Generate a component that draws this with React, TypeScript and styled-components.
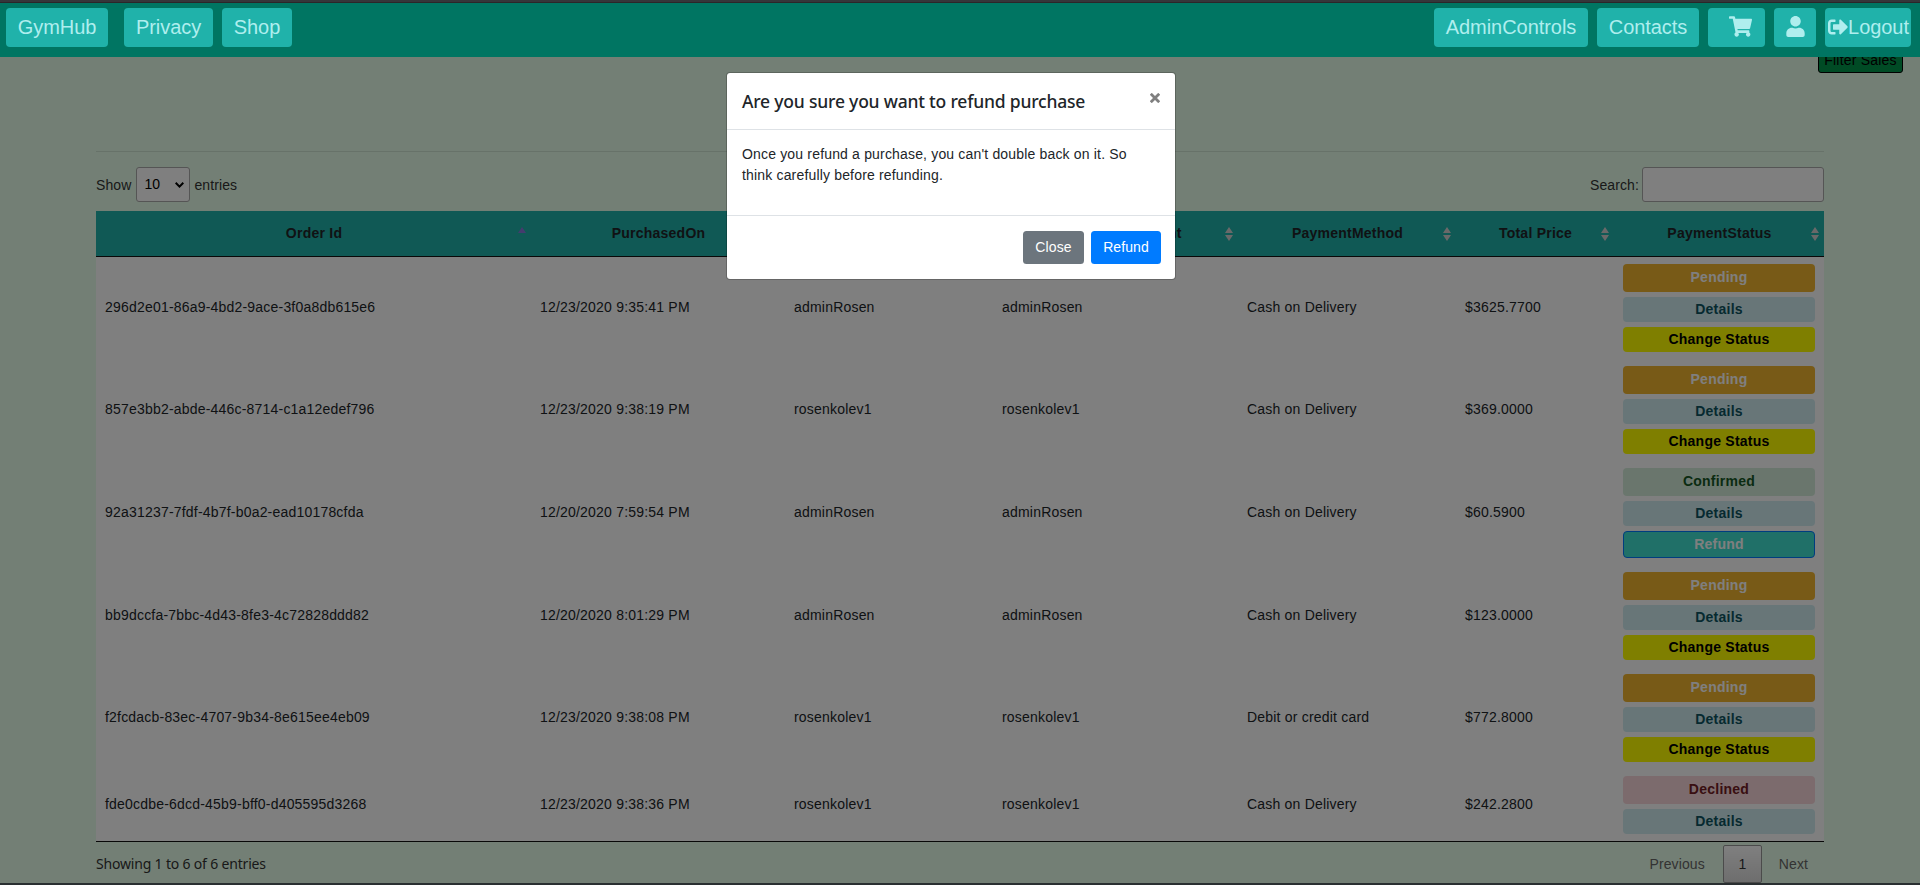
import React from "react";
import styled, { createGlobalStyle, css } from "styled-components";
import { FaShoppingCart, FaUser, FaSignOutAlt } from "react-icons/fa";

const GlobalStyle = createGlobalStyle`
  * { box-sizing: border-box; }
  body { margin: 0; background: #e6ffea; }
`;

const Page = styled.div`
  position: relative;
  display: flex;
  flex-direction: column;
  width: 1920px;
  height: 885px;
  overflow: hidden;
  border-top: 2px solid #35363a;
  border-bottom: 2px solid #2a2f31;
  background: #e6ffea;
  color: #212529;
  font: 14px/21px "Liberation Sans", Arial, sans-serif;
`;

const NavBar = styled.nav`
  display: flex;
  justify-content: space-between;
  flex: none;
  height: 55px;
  padding: 5px 9px 0 6px;
  border-top: 1px solid #2b2629;
  background: #007562;
`;

const NavGroup = styled.div`
  display: flex;
  gap: 9px;
`;

const NavButton = styled.a<{ $width: number; $gapAfter?: number; $shift?: number }>`
  display: flex;
  align-items: center;
  justify-content: center;
  width: ${(p) => p.$width}px;
  height: 39px;
  margin-right: ${(p) => p.$gapAfter ?? 0}px;
  padding-left: ${(p) => p.$shift ?? 0}px;
  padding-bottom: 2px;
  border-radius: 4px;
  background: #20b2aa;
  color: #afeeee;
  font-size: 20px;
  line-height: 30px;
  white-space: nowrap;
  letter-spacing: -0.05px;
`;

const Main = styled.main`
  position: relative;
  flex: 1;
  overflow: hidden;
`;

const FilterRow = styled.div`
  display: flex;
  justify-content: flex-end;
  height: 16px;
  align-items: flex-end;
  padding-right: 17px;
`;

const FilterButton = styled.button`
  flex: none;
  width: 85px;
  height: 27px;
  padding: 1px 0 0;
  border: 1px solid #000;
  border-radius: 3px;
  background: #00964b;
  color: #000;
  font: 14px/21px "Liberation Sans", Arial, sans-serif;
  letter-spacing: 0.2px;
`;

const Content = styled.section`
  width: 1728px;
  margin: 78px 0 0 96px;
`;

const Rule = styled.hr`
  height: 1px;
  margin: 0 0 15px;
  border: 0;
  background: rgba(0, 0, 0, 0.1);
`;

const Controls = styled.div`
  display: flex;
  justify-content: space-between;
  height: 44px;
  color: #333;
`;

const ControlLabel = styled.label<{ $gap: number }>`
  display: flex;
  gap: ${(p) => p.$gap}px;
  height: 35px;
  align-items: center;
`;

const LabelText = styled.span`
  padding-top: 1px;
  letter-spacing: 0.1px;
`;

const SelectBox = styled.span`
  display: flex;
  align-items: center;
  justify-content: space-between;
  width: 54px;
  height: 35px;
  margin-left: 1px;
  padding: 0 5px 0 7px;
  border: 1px solid #aaa;
  border-radius: 3px;
  background: #fff;
  color: #000;
`;

const SearchInput = styled.input`
  width: 182px;
  height: 35px;
  border: 1px solid #aaa;
  border-radius: 3px;
  background: #fff;
`;

const Table = styled.table`
  width: 1728px;
  table-layout: fixed;
  border-collapse: separate;
  border-spacing: 0;
  border-bottom: 1px solid #111;
`;

const HeadCell = styled.th`
  height: 46px;
  padding: 0;
  border-bottom: 1px solid #111;
  background: #20b2aa;
  color: #212529;
  font-weight: 700;
  letter-spacing: 0.24px;
`;

const HeadInner = styled.div`
  display: flex;
  align-items: center;
  padding: 0 3px 0 16px;
`;

const HeadLabel = styled.span`
  flex: 1;
  text-align: center;
`;

const Cell = styled.td`
  padding: 7px 9px;
  background: #fff;
  vertical-align: middle;
  white-space: nowrap;
`;

const CellText = styled.span`
  display: block;
  padding-bottom: 2px;
  letter-spacing: 0.2px;
`;

const Stack = styled.div`
  display: flex;
  flex-direction: column;
  gap: 5px;
`;

type Tone = "Pending" | "Confirmed" | "Declined" | "Details" | "Change Status" | "Refund";

const tones = {
  Pending: css`height: 28px; padding-bottom: 2px; background: #f0b42f; color: #fff;`,
  Confirmed: css`height: 28px; padding-bottom: 2px; background: #d4edda; color: #155724;`,
  Declined: css`height: 28px; padding-bottom: 2px; background: #f8d7da; color: #721c24;`,
  Details: css`height: 25px; background: #d1ecf1; color: #0c5460;`,
  "Change Status": css`height: 25px; background: #ff0; color: #000;`,
  Refund: css`height: 27px; border: 1px solid #007bff; background: #40e0d0; color: #fff;`,
};

const Pill = styled.div<{ $tone: Tone }>`
  display: flex;
  align-items: center;
  justify-content: center;
  border-radius: 4px;
  font-weight: 700;
  line-height: 21px;
  letter-spacing: 0.24px;
  ${(p) => tones[p.$tone]}
`;

const Footer = styled.div`
  display: flex;
  justify-content: space-between;
  padding-top: 3px;
  color: #333;
`;

const Info = styled.div`
  padding-top: 8px;
  font-family: "Noto Sans", sans-serif;
  letter-spacing: -0.18px;
`;

const Pager = styled.div`
  display: flex;
  align-items: center;
  color: #666;
`;

const PageLink = styled.span<{ $right: number }>`
  margin-right: ${(p) => p.$right}px;
  letter-spacing: 0.1px;
`;

const PageCurrent = styled.span`
  display: flex;
  align-items: center;
  justify-content: center;
  width: 39px;
  height: 38px;
  margin-right: 17px;
  border: 1px solid #979797;
  border-radius: 2px;
  background: linear-gradient(#fff, #dcdcdc);
  color: #333;
`;

const Backdrop = styled.div`
  position: absolute;
  inset: 0;
  background: rgba(0, 0, 0, 0.5);
`;

const Modal = styled.div`
  position: absolute;
  top: 15px;
  left: 726px;
  width: 450px;
  border: 1px solid rgba(0, 0, 0, 0.2);
  border-radius: 4px;
  background: #fff;
  background-clip: padding-box;
`;

const ModalHeader = styled.div`
  display: flex;
  justify-content: space-between;
  height: 57px;
  padding: 15px;
  border-bottom: 1px solid #dee2e6;
`;

const ModalTitle = styled.h5`
  margin: 0;
  font: 500 17.5px/27px "Noto Sans", sans-serif;
  letter-spacing: -0.2px;
  white-space: nowrap;
`;

const CloseIcon = styled.svg`
  width: 10px;
  height: 10px;
  margin-top: 4.5px;
`;

const ModalBody = styled.div`
  height: 85px;
  padding: 14px 25px 14px 15px;
  letter-spacing: 0.17px;
`;

const ModalFooter = styled.div`
  display: flex;
  justify-content: flex-end;
  gap: 7px;
  height: 64px;
  padding: 15px 14px 0;
  border-top: 1px solid #dee2e6;
`;

const ModalButton = styled.button<{ $color: string; $width: number }>`
  width: ${(p) => p.$width}px;
  height: 33px;
  padding: 0 0 1px;
  border: 0;
  border-radius: 3.5px;
  background: ${(p) => p.$color};
  color: #fff;
  font: 14px/21px "Liberation Sans", Arial, sans-serif;
  letter-spacing: 0.1px;
`;

const SortIcon = ({ active }: { active?: boolean }) => (
  <svg width="12" height="14" viewBox="0 0 12 14">
    <path d="M6 0 L10 6 H2 Z" fill={active ? "#8878dc" : "#d3d3d3"} />
    {!active && <path d="M2 8 H10 L6 14 Z" fill="#d3d3d3" />}
  </svg>
);

const columns = [
  { label: "Order Id", width: 435 },
  { label: "PurchasedOn", width: 254 },
  { label: "Purchaser", width: 208 },
  { label: "PurchasedAccount", width: 245 },
  { label: "PaymentMethod", width: 218 },
  { label: "Total Price", width: 158 },
  { label: "PaymentStatus", width: 210 },
];

const rows: { cells: string[]; actions: Tone[] }[] = [
  { cells: ["296d2e01-86a9-4bd2-9ace-3f0a8db615e6", "12/23/2020 9:35:41 PM", "adminRosen", "adminRosen", "Cash on Delivery", "$3625.7700"], actions: ["Pending", "Details", "Change Status"] },
  { cells: ["857e3bb2-abde-446c-8714-c1a12edef796", "12/23/2020 9:38:19 PM", "rosenkolev1", "rosenkolev1", "Cash on Delivery", "$369.0000"], actions: ["Pending", "Details", "Change Status"] },
  { cells: ["92a31237-7fdf-4b7f-b0a2-ead10178cfda", "12/20/2020 7:59:54 PM", "adminRosen", "adminRosen", "Cash on Delivery", "$60.5900"], actions: ["Confirmed", "Details", "Refund"] },
  { cells: ["bb9dccfa-7bbc-4d43-8fe3-4c72828ddd82", "12/20/2020 8:01:29 PM", "adminRosen", "adminRosen", "Cash on Delivery", "$123.0000"], actions: ["Pending", "Details", "Change Status"] },
  { cells: ["f2fcdacb-83ec-4707-9b34-8e615ee4eb09", "12/23/2020 9:38:08 PM", "rosenkolev1", "rosenkolev1", "Debit or credit card", "$772.8000"], actions: ["Pending", "Details", "Change Status"] },
  { cells: ["fde0cdbe-6dcd-45b9-bff0-d405595d3268", "12/23/2020 9:38:36 PM", "rosenkolev1", "rosenkolev1", "Cash on Delivery", "$242.2800"], actions: ["Declined", "Details"] },
];

export default function App() {
  return (
    <>
      <GlobalStyle />
      <Page>
        <NavBar>
          <NavGroup>
            <NavButton $width={102} $gapAfter={7}>GymHub</NavButton>
            <NavButton $width={89}>Privacy</NavButton>
            <NavButton $width={70}>Shop</NavButton>
          </NavGroup>
          <NavGroup>
            <NavButton $width={154}>AdminControls</NavButton>
            <NavButton $width={102}>Contacts</NavButton>
            <NavButton $width={57} $shift={7}><FaShoppingCart size={23} /></NavButton>
            <NavButton $width={42}><FaUser size={21} /></NavButton>
            <NavButton $width={86} $shift={1}><FaSignOutAlt size={20} />Logout</NavButton>
          </NavGroup>
        </NavBar>
        <Main>
          <FilterRow>
            <FilterButton>Filter Sales</FilterButton>
          </FilterRow>
          <Content>
            <Rule />
            <Controls>
              <ControlLabel $gap={4}>
                <LabelText>Show</LabelText>
                <SelectBox>
                  10
                  <svg width="9" height="6" viewBox="0 0 9 6">
                    <path d="M0.7 0.8 L4.5 4.6 L8.3 0.8" fill="none" stroke="#000" strokeWidth="2" />
                  </svg>
                </SelectBox>
                <LabelText>entries</LabelText>
              </ControlLabel>
              <ControlLabel $gap={3}>
                <LabelText>Search:</LabelText>
                <SearchInput />
              </ControlLabel>
            </Controls>
            <Table>
              <colgroup>
                {columns.map((c) => <col key={c.label} width={c.width} />)}
              </colgroup>
              <thead>
                <tr>
                  {columns.map((c, i) => (
                    <HeadCell key={c.label}>
                      <HeadInner>
                        <HeadLabel>{c.label}</HeadLabel>
                        <SortIcon active={i === 0} />
                      </HeadInner>
                    </HeadCell>
                  ))}
                </tr>
              </thead>
              <tbody>
                {rows.map((r) => (
                  <tr key={r.cells[0]}>
                    {r.cells.map((text, i) => (
                      <Cell key={i}><CellText>{text}</CellText></Cell>
                    ))}
                    <Cell>
                      <Stack>
                        {r.actions.map((a) => <Pill key={a} $tone={a}>{a}</Pill>)}
                      </Stack>
                    </Cell>
                  </tr>
                ))}
              </tbody>
            </Table>
            <Footer>
              <Info>Showing 1 to 6 of 6 entries</Info>
              <Pager>
                <PageLink $right={18}>Previous</PageLink>
                <PageCurrent>1</PageCurrent>
                <PageLink $right={16}>Next</PageLink>
              </Pager>
            </Footer>
          </Content>
          <Backdrop />
          <Modal>
            <ModalHeader>
              <ModalTitle>Are you sure you want to refund purchase</ModalTitle>
              <CloseIcon viewBox="0 0 10 10">
                <path d="M0.8 0.8 L9.2 9.2 M9.2 0.8 L0.8 9.2" stroke="#7f7f7f" strokeWidth="2.8" />
              </CloseIcon>
            </ModalHeader>
            <ModalBody>
              Once you refund a purchase, you can't double back on it. So think carefully before refunding.
            </ModalBody>
            <ModalFooter>
              <ModalButton $color="#6c757d" $width={61}>Close</ModalButton>
              <ModalButton $color="#007bff" $width={70}>Refund</ModalButton>
            </ModalFooter>
          </Modal>
        </Main>
      </Page>
    </>
  );
}
